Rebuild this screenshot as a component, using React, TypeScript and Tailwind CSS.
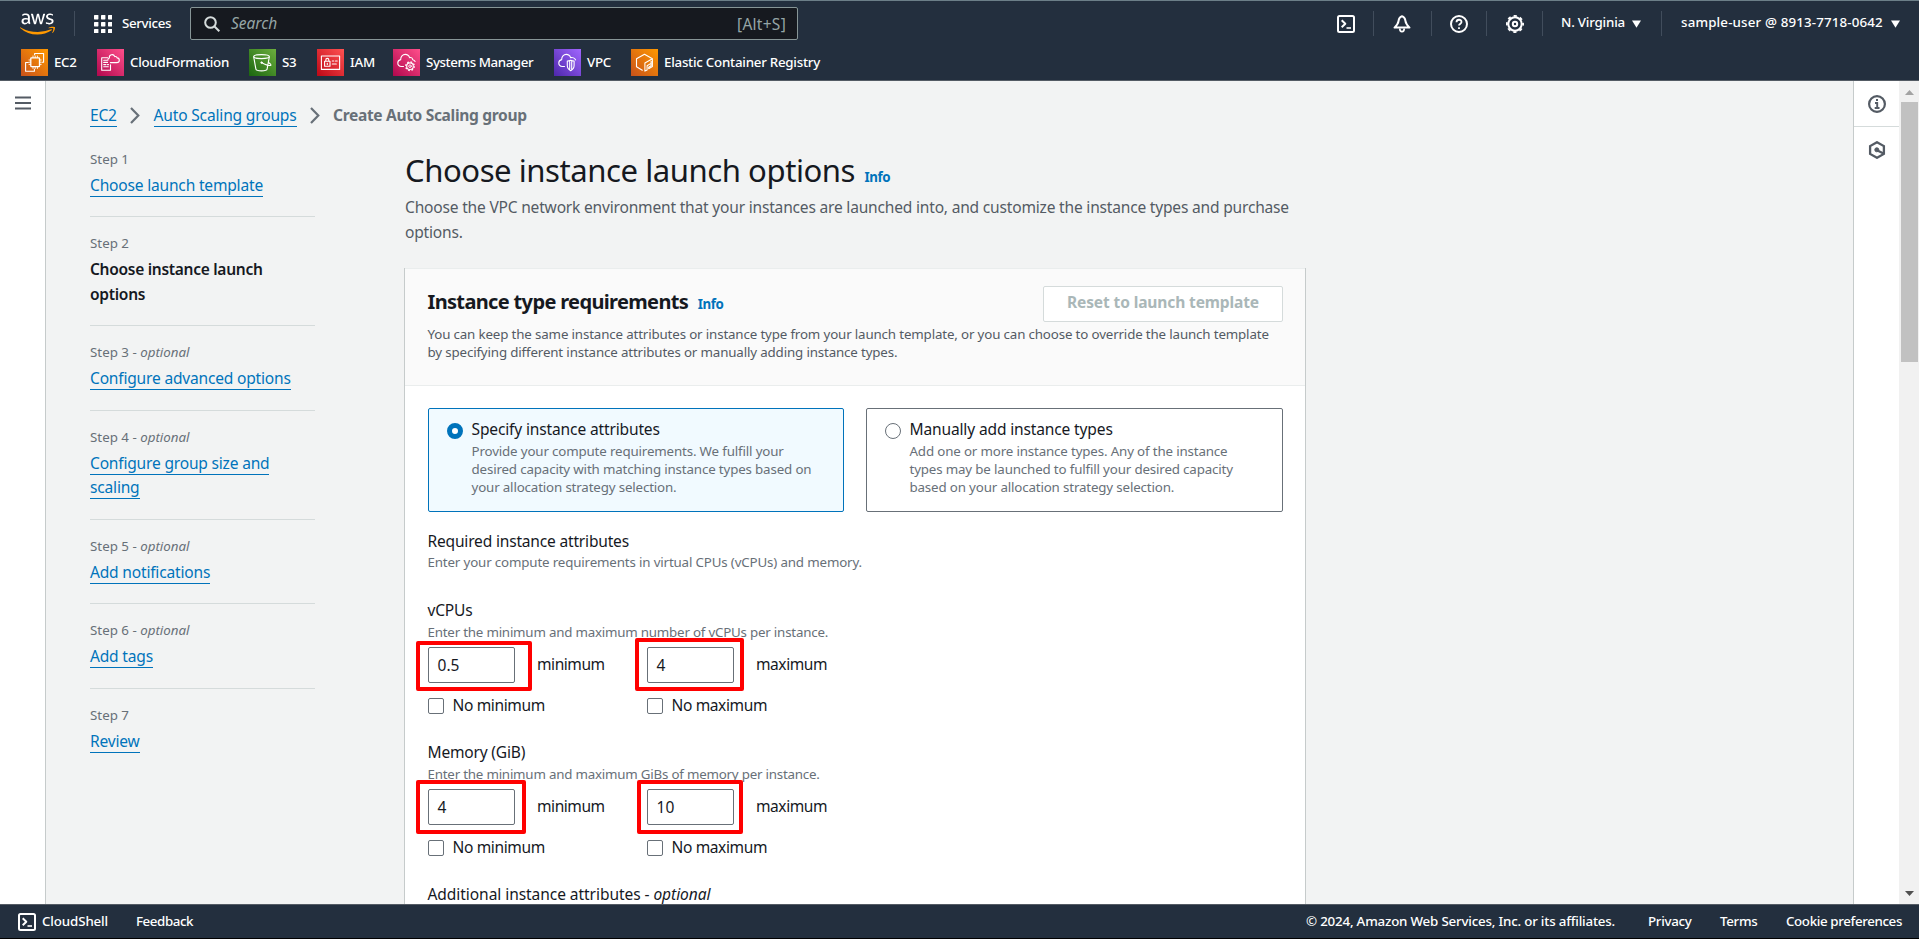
import type { ReactNode } from "react";
import { FaAws } from "react-icons/fa";

const small = "text-[13.33px] leading-[18px] tracking-[-0.155px]";
const body = "text-[15.56px] leading-[24.44px] tracking-[-0.19px]";

function ServiceIcon({ id, from, to, children }: { id: string; from: string; to: string; children: ReactNode }) {
  return (
    <svg width="27" height="27" viewBox="0 0 27 27" fill="none" stroke="#fff" strokeWidth="1.1" strokeLinejoin="round" strokeLinecap="round" className="shrink-0">
      <defs>
        <linearGradient id={id} x1="0" y1="1" x2="1" y2="0">
          <stop offset="0" stopColor={from} />
          <stop offset="1" stopColor={to} />
        </linearGradient>
      </defs>
      <rect width="27" height="27" fill={`url(#${id})`} stroke="none" />
      {children}
    </svg>
  );
}

const favorites: { label: string; width: string; track: string; icon: ReactNode }[] = [
  {
    label: "EC2",
    width: "w-[23px]",
    track: "tracking-[-0.3px]",
    icon: (
      <ServiceIcon id="ec2" from="#C8511B" to="#FF9900">
        <rect x="9.8" y="8.9" width="8.700" height="8.700" rx="0.6" strokeWidth="1.3" />
        <path d="M12 8.500V7M14.200 8.500V7M16.400 8.500V7M12 19.500V18M14.200 19.500V18M16.400 19.500V18M9.400 11H8M9.400 13.200H8M9.400 15.400H8M20.200 11h-1.400M20.200 13.200h-1.400M20.200 15.400h-1.400" strokeWidth="0.9" />
        <path d="M13.600 5.800V4.500h9v8.800h-1.300M7.300 13.500H4.600v8.800h8.800v-2" />
      </ServiceIcon>
    ),
  },
  {
    label: "CloudFormation",
    width: "w-[99px]",
    track: "tracking-[-0.29px]",
    icon: (
      <ServiceIcon id="cfn" from="#B0084D" to="#FF4F8B">
        <path d="M10.700 8.800H4.700v12.400h8.800v-5.500M6.700 11.200h3.200M6.700 13.400h3.800M6.700 15.600h2.300M10.500 15.600h1M6.700 17.800h4.600" />
        <path d="M13.400 13.600h6.200c1.700 0 2.700-1 2.700-2.400 0-1.300-.8-2.200-2.200-2.300-.2-1.200-1.300-1.700-2.300-1.300-.6-1.500-2-2.200-3.400-1.800-1.500.4-2.300 1.700-2.100 3.200-1.200.5-1.700 1.300-1.500 2.400" />
      </ServiceIcon>
    ),
  },
  {
    label: "S3",
    width: "w-[15px]",
    track: "tracking-[-0.4px]",
    icon: (
      <ServiceIcon id="s3" from="#1B660F" to="#6CAE3E">
        <ellipse cx="12.500" cy="7.600" rx="7.800" ry="2" />
        <path d="M4.700 7.800l2.200 12.400c.2 1 2.700 1.700 5.600 1.700s5.400-.7 5.600-1.700l2.200-12.400M12.800 13.700c3.200 1.700 6.700 3 8.700 2.800 1-.3.300-1.500-2.100-3" />
        <circle cx="12.600" cy="13.600" r="0.9" fill="#fff" strokeWidth="0.6" />
      </ServiceIcon>
    ),
  },
  {
    label: "IAM",
    width: "w-[23px]",
    track: "tracking-[-0.2px]",
    icon: (
      <ServiceIcon id="iam" from="#BD0816" to="#FF5252">
        <path d="M4.400 7h18.200v13.400H4.400zM7.600 12.300h5.400v5H7.600zM8.800 12.100v-1.200a1.500 1.500 0 0 1 3 0v1.200M10.300 14.200v1.200M15.300 12h1.500M18.500 12h1.700M15.300 15h4" />
      </ServiceIcon>
    ),
  },
  {
    label: "Systems Manager",
    width: "w-[108px]",
    track: "tracking-[-0.43px]",
    icon: (
      <ServiceIcon id="ssm" from="#B0084D" to="#FF4F8B">
        <path d="M10.500 17.500H8.400C6.200 17.300 4.800 15.900 4.800 14c0-1.900 1.200-3.100 2.900-3.400C7.600 7.600 9.700 5.400 12.200 5.400c2.200 0 3.800 1.300 4.400 3.200 1.700-.5 3 .5 3.100 2.200 1.200.3 2 .9 2.400 1.700" />
        <circle cx="17" cy="17.200" r="3.300" />
        <circle cx="17" cy="17.200" r="1.300" strokeWidth="0.9" />
        <circle cx="17" cy="17.200" r="4.300" strokeWidth="1.300" strokeDasharray="1.700 1.677" strokeLinecap="butt" />
      </ServiceIcon>
    ),
  },
  {
    label: "VPC",
    width: "w-[24px]",
    track: "tracking-[-0.3px]",
    icon: (
      <ServiceIcon id="vpc" from="#4D27AA" to="#A166FF">
        <path d="M10.500 17.500H8.400C6.200 17.300 4.800 15.900 4.800 14c0-1.900 1.200-3.100 2.900-3.400C7.600 7.600 9.700 5.400 12.200 5.400c2.200 0 3.800 1.300 4.400 3.200 1.900-.5 4.300.5 5 2.300" />
        <path d="M16.700 11.200c1.200.5 2.200.8 3.400.8v4.500c0 2.300-1.200 4-3.400 5.200-2.200-1.200-3.400-2.900-3.400-5.200V12c1.200 0 2.200-.3 3.400-.8zM15.700 12v9M17.700 12v9" />
      </ServiceIcon>
    ),
  },
  {
    label: "Elastic Container Registry",
    width: "w-[157px]",
    track: "tracking-[-0.25px]",
    icon: (
      <ServiceIcon id="ecr" from="#C8511B" to="#FF9900">
        <path d="M11.300 21.200L5.500 17.800v-8l8-4.600 7.900 4.600-7.500 4.300v8l2.200-1.200v-4.200l3-1.800M21.400 10.500v7l-3.700 2.200v-1.400l2.400-1.500v-4.500" />
      </ServiceIcon>
    ),
  },
];

function ShellIcon() {
  return (
    <svg width="18" height="18" viewBox="0 0 18 18" fill="none" stroke="#fff" strokeWidth="2" strokeLinejoin="round" className="shrink-0">
      <rect x="1" y="1" width="16" height="16" rx="1.500" />
      <path d="M4.700 5.300l3.600 3.500-3.600 3.500" />
      <path d="M9.500 13h4.500" strokeWidth="1.600" />
    </svg>
  );
}

function Caret() {
  return (
    <svg width="9" height="8" viewBox="0 0 9 8" fill="#fff" className="shrink-0">
      <path d="M0 .5h9L4.500 7.800z" />
    </svg>
  );
}

function Divider() {
  return <span className="h-[25px] w-px shrink-0 bg-[#414d5c]" />;
}

function Header() {
  return (
    <header className="flex h-[81px] shrink-0 flex-col border-t border-b border-t-[#6c7f88] border-b-[#545b64] bg-[#232f3e] text-[13.33px] font-medium text-white">
      <div className="flex h-[45px] shrink-0 items-center">
        <svg width="0" height="0" className="absolute">
          <defs>
            <linearGradient id="aws" x1="0" y1="0" x2="0" y2="1">
              <stop offset="0.6" stopColor="#fff" />
              <stop offset="0.6" stopColor="#ff9900" />
            </linearGradient>
          </defs>
        </svg>
        <FaAws className="ml-[20px] h-[28px] w-[35px]" fill="url(#aws)" />
        <span className="ml-[19px] flex"><Divider /></span>
        <svg width="18" height="18" viewBox="0 0 18 18" fill="#fff" className="ml-[19px]">
          {[0, 7, 14].map((y) => [0, 7, 14].map((x) => <rect key={`${x}-${y}`} x={x} y={y} width="4.400" height="4.400" rx="0.600" />))}
        </svg>
        <span className="ml-[10px] w-[68px] tracking-[-0.36px]">Services</span>
        <div className="flex h-[33px] w-[608px] items-center justify-between rounded-[2px] border border-[#879596] bg-[#16191f] pr-[11px] pl-[13px] text-[15.5px] text-[#95a5a6]">
          <div className="flex items-center gap-[11px] font-normal">
            <svg width="16" height="16" viewBox="0 0 16 16" fill="none" stroke="#d5dbdb" strokeWidth="2">
              <circle cx="6.500" cy="6.500" r="5.300" />
              <path d="M10.300 10.300l5 5" />
            </svg>
            <span className="italic">Search</span>
          </div>
          <span className="pt-[2px] font-normal tracking-[0.27px]">[Alt+S]</span>
        </div>
        <div className="ml-auto flex items-center pr-[19px]">
          <ShellIcon />
          <span className="ml-[18px] mr-[19px] flex"><Divider /></span>
          <svg width="18" height="18" viewBox="0 0 18 18" fill="none" stroke="#fff" strokeWidth="2" strokeLinejoin="round">
            <path d="M9 1.300C6.300 2 5.800 4 5.500 6.200 5.200 8.800 4 10.200 1.500 12.600h15c-2.500-2.400-3.700-3.800-4-6.400C12.200 4 11.700 2 9 1.300z" />
            <path d="M6.800 13.500c0 4.300 4.400 4.300 4.400 0" strokeWidth="1.700" />
          </svg>
          <span className="ml-[20px] mr-[18px] flex"><Divider /></span>
          <svg width="18" height="18" viewBox="0 0 18 18" fill="none" stroke="#fff" strokeWidth="2">
            <circle cx="9" cy="9" r="8" />
            <path d="M6.500 7.200c0-3.300 5-3.200 5-.2 0 1.700-2.500 1.700-2.500 3.600M9 12.200v1.800" strokeWidth="1.800" />
          </svg>
          <span className="ml-[18px] mr-[19px] flex"><Divider /></span>
          <svg width="18" height="18" viewBox="0 0 18 18" fill="none" stroke="#fff">
            <circle cx="9" cy="9" r="6.700" strokeWidth="2" />
            <circle cx="9" cy="9" r="8.100" strokeWidth="1.800" strokeDasharray="3.181 3.181" strokeDashoffset="1.590" />
            <circle cx="9" cy="9" r="2.200" strokeWidth="2" />
          </svg>
          <span className="ml-[18px] mr-[18px] flex"><Divider /></span>
          <span className="w-[71px] pb-[2px] tracking-[-0.2px] whitespace-nowrap">N. Virginia</span>
          <Caret />
          <span className="ml-[20px] mr-[19px] flex"><Divider /></span>
          <span className="w-[210px] pb-[2px] tracking-[0.15px] whitespace-nowrap">sample-user @ 8913-7718-0642</span>
          <Caret />
        </div>
      </div>
      <div className="flex h-[33px] items-center gap-[20px] pl-[21px]">
        {favorites.map((f) => (
          <div key={f.label} className="flex items-center gap-[6px]">
            {f.icon}
            <span className={`whitespace-nowrap ${f.width} ${f.track}`}>{f.label}</span>
          </div>
        ))}
      </div>
    </header>
  );
}

const linkClass = "border-b border-[#0073bb] text-[#0073bb]";

function Chevron() {
  return (
    <svg width="10" height="17" viewBox="0 0 10 17" fill="none" stroke="#687078" strokeWidth="2.200">
      <path d="M1 1l7.300 7.500L1 16" />
    </svg>
  );
}

const steps: { n: number; optional?: boolean; title: ReactNode; current?: boolean }[] = [
  { n: 1, title: "Choose launch template" },
  { n: 2, title: <>Choose instance launch<br />options</>, current: true },
  { n: 3, optional: true, title: "Configure advanced options" },
  { n: 4, optional: true, title: <>Configure group size and<br />scaling</> },
  { n: 5, optional: true, title: "Add notifications" },
  { n: 6, optional: true, title: "Add tags" },
  { n: 7, title: "Review" },
];

function StepNav() {
  return (
    <ol className="w-[225px] shrink-0">
      {steps.map((s) => (
        <li key={s.n} className={s.n < 7 ? "mb-[16.8px] border-b border-[#d5dbdb] pb-[19.4px]" : ""}>
          <div className="pb-[4.9px] text-[13.33px] leading-[18px] text-[#687078]">
            Step {s.n}
            {s.optional && <> - <i>optional</i></>}
          </div>
          {s.current ? (
            <div className="text-[15.56px] leading-[24.44px] font-semibold tracking-[-0.3px] text-[#16191f]">{s.title}</div>
          ) : (
            <div className={body}><a className={linkClass}>{s.title}</a></div>
          )}
        </li>
      ))}
    </ol>
  );
}

function Tile({ selected, title, children }: { selected?: boolean; title: string; children: ReactNode }) {
  return (
    <div className={`flex h-[104px] gap-[9px] rounded-[2px] border pt-[8px] pl-[18px] ${selected ? "border-[#0073bb] bg-[#f1faff]" : "border-[#687078] bg-white"}`}>
      <span className={`mt-[6px] size-[16px] shrink-0 rounded-full bg-white ${selected ? "border-5 border-[#0073bb]" : "border border-[#687078]"}`} />
      <div>
        <div className="text-[15.56px] leading-[24.44px] tracking-[-0.15px] text-[#16191f]">{title}</div>
        <p className="mt-[0.8px] text-[13.33px] leading-[18px] tracking-[-0.155px] whitespace-nowrap text-[#687078]">{children}</p>
      </div>
    </div>
  );
}

function Field({ value, kind, mark }: { value: string; kind: "minimum" | "maximum"; mark: string }) {
  return (
    <div className="w-[219px] text-[15.56px] leading-[24.44px] text-[#16191f]">
      <div className="relative flex h-[36px] items-center gap-[22.5px]">
        <span className="flex h-[36px] w-[87px] items-center rounded-[2px] border border-[#687078] bg-white pl-[9px]">{value}</span>
        <span className="pb-[2px] tracking-[-0.45px]">{kind}</span>
        <span className={`absolute rounded-[2px] border-4 border-[#ff0000] ${mark}`} />
      </div>
      <div className="mt-[10.500px] flex items-center gap-[9px]">
        <span className="mt-px size-[16px] rounded-[2px] border border-[#687078] bg-white" />
        <span className="tracking-[-0.38px]">No {kind}</span>
      </div>
    </div>
  );
}

function RangeGroup({ label, hint, min, max, minMark, maxMark }: { label: string; hint: string; min: string; max: string; minMark: string; maxMark: string }) {
  return (
    <div className="h-[142px]">
      <div className={`${body} text-[#16191f]`}>{label}</div>
      <div className="text-[13.33px] leading-[18px] tracking-[-0.21px] text-[#687078]">{hint}</div>
      <div className="mt-[6px] flex">
        <Field value={min} kind="minimum" mark={minMark} />
        <Field value={max} kind="maximum" mark={maxMark} />
      </div>
    </div>
  );
}

function Panel() {
  return (
    <section className="mt-[24px] w-[900px] border-t border-[#eaeded] bg-white shadow-[-1px_0_0_#c6cbcb,1px_0_0_#c6cbcb]">
      <div className="h-[117px] border-b border-[#eaeded] bg-[#fafafa] pt-[17px] pr-[22px] pl-[22.5px]">
        <div className="flex h-[36px] items-start justify-between">
          <div className="flex items-baseline gap-[9.5px] pt-[2px] font-bold">
            <h2 className="text-[20px] leading-[27px] tracking-[-0.65px] text-[#16191f]">Instance type requirements</h2>
            <a className="text-[13.33px] tracking-[-0.4px] text-[#0073bb]">Info</a>
          </div>
          <button className="h-[36px] w-[240px] rounded-[2px] border border-[#d5dbdb] bg-white pb-[2px] text-[15.56px] font-bold tracking-[-0.13px] text-[#aab7b8]">Reset to launch template</button>
        </div>
        <p className="mt-[3px] text-[13.33px] leading-[18px] tracking-[-0.15px] whitespace-nowrap text-[#545b64]">
          You can keep the same instance attributes or instance type from your launch template, or you can choose to override the launch template
          <br />
          by specifying different instance attributes or manually adding instance types.
        </p>
      </div>
      <div className="pt-[22px] pr-[22px] pl-[22.5px]">
        <div className="grid grid-cols-[416px_417px] gap-[22px]">
          <Tile selected title="Specify instance attributes">
            Provide your compute requirements. We fulfill your<br />desired capacity with matching instance types based on<br />your allocation strategy selection.
          </Tile>
          <Tile title="Manually add instance types">
            Add one or more instance types. Any of the instance<br />types may be launched to fulfill your desired capacity<br />based on your allocation strategy selection.
          </Tile>
        </div>
        <div className="mt-[17px] mb-[27px]">
          <div className={`${body} text-[#16191f]`}>Required instance attributes</div>
          <div className={`${small} text-[#687078]`}>Enter your compute requirements in virtual CPUs (vCPUs) and memory.</div>
        </div>
        <RangeGroup label="vCPUs" hint="Enter the minimum and maximum number of vCPUs per instance." min="0.5" max="4"
          minMark="-left-[11.5px] -top-[5.5px] h-[50px] w-[116px]" maxMark="-left-[11.5px] -top-[8.5px] h-[53px] w-[109px]" />
        <RangeGroup label="Memory (GiB)" hint="Enter the minimum and maximum GiBs of memory per instance." min="4" max="10"
          minMark="-left-[11.5px] -top-[9px] h-[54px] w-[110px]" maxMark="-left-[9.5px] -top-[9px] h-[54px] w-[106px]" />
        <div className="text-[15.56px] leading-[24.44px] tracking-[-0.07px] text-[#16191f]">Additional instance attributes - <i>optional</i></div>
      </div>
    </section>
  );
}

export default function App() {
  return (
    <div className="flex h-[939px] w-[1919px] flex-col overflow-hidden bg-[#f2f3f3] font-['Noto_Sans',sans-serif]">
      <Header />
      <div className="flex h-[823px] shrink-0 overflow-hidden">
        <aside className="w-[46px] shrink-0 border-r border-[#c6cbcb] bg-white pt-[15px] pl-[15px]">
          <svg width="16" height="14" viewBox="0 0 16 14" stroke="#545b64" strokeWidth="2">
            <path d="M0 1.500h16M0 7h16M0 12.500h16" />
          </svg>
        </aside>
        <main className="flex-1 overflow-hidden pt-[22px] pl-[44px]">
          <nav className={`flex h-[24px] items-center ${body}`}>
            <span className="w-[40px]"><a className={linkClass}>EC2</a></span>
            <Chevron />
            <span className="ml-[13.5px] w-[156.500px] tracking-[-0.17px]"><a className={linkClass}>Auto Scaling groups</a></span>
            <Chevron />
            <span className="ml-[13px] font-bold tracking-[-0.33px] text-[#687078]">Create Auto Scaling group</span>
          </nav>
          <div className="mt-[22.7px] flex gap-[90px]">
            <StepNav />
            <div className="w-[900px]">
              <div className="flex items-baseline gap-[9.5px]">
                <h1 className="text-[31.1px] leading-[40px] tracking-[-0.46px] text-[#16191f]">Choose instance launch options</h1>
                <a className="text-[13.33px] font-bold tracking-[-0.4px] text-[#0073bb]">Info</a>
              </div>
              <p className="mt-[5.400px] text-[15.56px] leading-[24.44px] tracking-[-0.195px] whitespace-nowrap text-[#545b64]">
                Choose the VPC network environment that your instances are launched into, and customize the instance types and purchase
                <br />
                options.
              </p>
              <Panel />
            </div>
          </div>
        </main>
        <aside className="flex w-[46px] shrink-0 flex-col items-center border-l border-[#c6cbcb] bg-white">
          <div className="flex h-[46px] w-full items-center justify-center border-b border-[#d5dbdb]">
            <svg width="18" height="18" viewBox="0 0 18 18" fill="none" stroke="#545b64" strokeWidth="2.200">
              <circle cx="9" cy="9" r="7.900" />
              <path d="M7 8h2.200v5M6.700 13h4.800M8 5h2" strokeWidth="1.900" />
            </svg>
          </div>
          <svg width="18" height="18" viewBox="0 0 18 18" fill="none" stroke="#545b64" strokeWidth="2.300" className="mt-[14px]">
            <path d="M9 1.200l6.900 3.900v7.800L9 16.800l-6.900-3.900V5.100z" />
            <circle cx="8.800" cy="8.800" r="2" fill="#545b64" strokeWidth="1" />
            <path d="M9.500 9.500l6 3" />
          </svg>
        </aside>
        <div className="flex w-[20px] shrink-0 flex-col items-center bg-[#f1f1f1]">
          <svg width="9" height="5" viewBox="0 0 9 5" fill="#a3a3a3" className="mt-[9px]"><path d="M4.500 0L9 5H0z" /></svg>
          <div className="mt-[7px] h-[260px] w-[17px] bg-[#c1c1c1]" />
          <svg width="9" height="5" viewBox="0 0 9 5" fill="#505050" className="mt-auto mb-[8px]"><path d="M4.500 5L9 0H0z" /></svg>
        </div>
      </div>
      <footer className="flex h-[35px] shrink-0 items-center border-t border-b border-t-[#545b64] border-b-black bg-[#232f3e] pl-[18px] text-[13.33px] leading-[18px] font-medium text-white">
        <ShellIcon />
        <span className="ml-[6px] w-[94px] pb-[2px] tracking-[-0.13px]">CloudShell</span>
        <span className="pb-[2px] tracking-[-0.43px]">Feedback</span>
        <span className="ml-auto w-[342px] pb-[2px] tracking-[-0.195px] whitespace-nowrap">© 2024, Amazon Web Services, Inc. or its affiliates.</span>
        <span className="w-[72px] pb-[2px] tracking-[-0.3px]">Privacy</span>
        <span className="w-[66px] pb-[2px] tracking-[-0.3px]">Terms</span>
        <span className="w-[133px] pb-[2px] tracking-[-0.37px] whitespace-nowrap">Cookie preferences</span>
      </footer>
    </div>
  );
}
